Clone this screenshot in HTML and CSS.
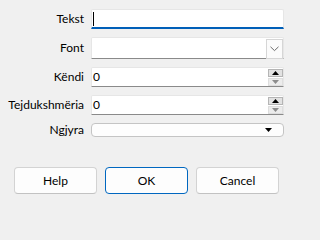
FILE: index.html
```html
<!DOCTYPE html>
<html>
<head>
<meta charset="utf-8">
<link rel="stylesheet" href="styles.css">
</head>
<body>
<div class="dialog">
  <div class="form">
    <span class="lbl">Tekst</span>
    <div class="field text focused"><span class="caret"></span></div>

    <span class="lbl">Font</span>
    <div class="field combo">
      <span class="dd"><svg width="9" height="6" viewBox="0 0 9 6"><path d="M0.5 0.8 L4.5 4.6 L8.5 0.8" fill="none" stroke="#6a6a6a" stroke-width="1"/></svg></span>
    </div>

    <span class="lbl">Këndi</span>
    <div class="field spin">
      <span class="val">0</span>
      <span class="spinbtns">
        <span class="sbtn up"><svg width="7" height="4" viewBox="0 0 7 4"><path d="M0 4 L3.5 0 L7 4 Z" fill="#000"/></svg></span>
        <span class="sbtn down"><svg width="7" height="4" viewBox="0 0 7 4"><path d="M0 0 L7 0 L3.5 4 Z" fill="#8c8c8c"/></svg></span>
      </span>
    </div>

    <span class="lbl">Tejdukshmëria</span>
    <div class="field spin">
      <span class="val">0</span>
      <span class="spinbtns">
        <span class="sbtn up"><svg width="7" height="4" viewBox="0 0 7 4"><path d="M0 4 L3.5 0 L7 4 Z" fill="#000"/></svg></span>
        <span class="sbtn down"><svg width="7" height="4" viewBox="0 0 7 4"><path d="M0 0 L7 0 L3.5 4 Z" fill="#8c8c8c"/></svg></span>
      </span>
    </div>

    <span class="lbl">Ngjyra</span>
    <div class="color"><svg width="7" height="4" viewBox="0 0 7 4"><path d="M0 0 L7 0 L3.5 4 Z" fill="#000"/></svg></div>
  </div>
  <div class="buttons">
    <button class="btn">Help</button>
    <button class="btn default">OK</button>
    <button class="btn">Cancel</button>
  </div>
</div>
</body>
</html>
```
FILE: styles.css
```css
html, body {
  margin: 0;
  padding: 0;
  background: #f0f0f0;
}
body {
  font-family: "Segoe UI", "Lato", "Noto Sans", sans-serif;
  font-size: 12px;
  color: #000;
  width: 293px;
  height: 210px;
  overflow: hidden;
}
.dialog {
  padding-top: 9px;
}
.form {
  display: grid;
  grid-template-columns: 84px 193px;
  grid-template-rows: 20px 22px 20px 20px 13px;
  column-gap: 7px;
  row-gap: 8px;
  align-items: center;
}
.lbl {
  text-align: right;
  white-space: nowrap;
  line-height: 14px;
}
.field {
  box-sizing: border-box;
  height: 100%;
  background: #fff;
  border: 1px solid #e6e6e6;
  border-bottom: 1px solid #8a8a8a;
  border-radius: 2px 2px 0 0;
  display: flex;
  align-items: center;
  position: relative;
}
.field.focused {
  border-bottom: 2px solid #005fb8;
}
.caret {
  width: 1px;
  height: 14px;
  background: #000;
  margin-left: 1px;
}
.combo {
  justify-content: flex-end;
}
.dd {
  box-sizing: border-box;
  width: 17px;
  height: 20px;
  margin-top: 1px;
  border: 1px solid #d6d6d6;
  background: #fbfbfb;
  display: flex;
  align-items: center;
  justify-content: center;
}
.spin {
  justify-content: space-between;
}
.val {
  padding-left: 1px;
  line-height: 14px;
}
.spinbtns {
  display: flex;
  flex-direction: column;
  gap: 1px;
}
.sbtn {
  box-sizing: border-box;
  width: 15px;
  height: 8px;
  display: flex;
  align-items: center;
  justify-content: center;
}
.sbtn.up {
  background: #e2e2e2;
  border: 1px solid #b5b5b5;
}
.sbtn.down {
  background: #ececec;
  border: 1px solid #dedede;
}
.color {
  box-sizing: border-box;
  height: 14px;
  margin-top: 1px;
  background: #fdfdfd;
  border: 1px solid #c4c4c4;
  border-radius: 4px;
  display: flex;
  align-items: center;
  justify-content: flex-end;
  padding-right: 11px;
}
.buttons {
  display: flex;
  gap: 8px;
  padding-left: 14px;
  margin-top: 31px;
}
.btn {
  box-sizing: border-box;
  width: 83px;
  height: 27px;
  font-family: inherit;
  font-size: 12px;
  color: #000;
  background: #fdfdfd;
  border: 1px solid #d3d3d3;
  border-bottom-color: #c2c2c2;
  border-radius: 4px;
  padding: 0;
}
.btn.default {
  border: 1px solid #0067c0;
}
```
